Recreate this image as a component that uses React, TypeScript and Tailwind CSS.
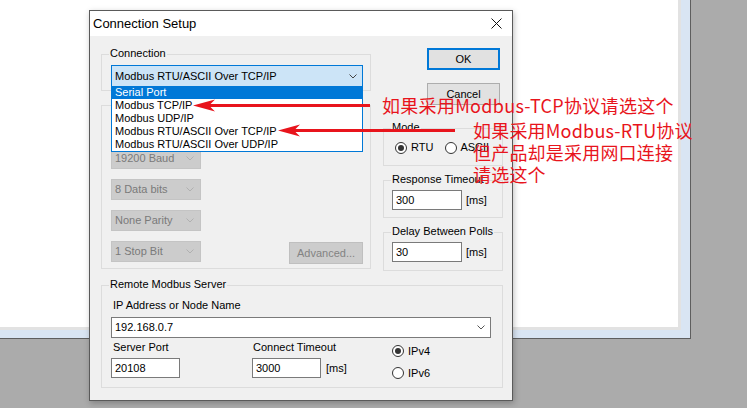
import React from "react";

function Chevron({ color }: { color: string }) {
  return (
    <svg width="8" height="5" viewBox="0 0 8 5" className="shrink-0">
      <path d="M0.5 0.5 L4 4 L7.5 0.5" fill="none" stroke={color} strokeWidth="1" />
    </svg>
  );
}

function Group({
  label,
  className,
  children,
}: {
  label?: string;
  className?: string;
  children?: React.ReactNode;
}) {
  return (
    <div className={`relative border border-[#dcdcdc] ${className ?? ""}`}>
      {label && (
        <span className="absolute left-[7px] top-[-8px] whitespace-nowrap bg-[#f0f0f0] px-[1px] leading-[13px]">
          {label}
        </span>
      )}
      {children}
    </div>
  );
}

function Radio({ checked }: { checked?: boolean }) {
  return (
    <span className="flex h-[12px] w-[12px] shrink-0 items-center justify-center rounded-full border border-[#333333] bg-white">
      {checked && <span className="h-[6px] w-[6px] rounded-full bg-[#333333]" />}
    </span>
  );
}

function DisabledCombo({ text }: { text: string }) {
  return (
    <div className="flex h-[21px] w-[90px] items-center justify-between border border-[#c4c4c4] bg-[#cccccc] pl-[3px] pr-[6px] text-[#7a7a7a]">
      <span className="leading-[13px]">{text}</span>
      <Chevron color="#b0b0b0" />
    </div>
  );
}

function TextBox({ value, w, h }: { value: string; w: string; h: string }) {
  return (
    <div className={`flex items-center border border-[#7a7a7a] bg-white pl-[3px] leading-[13px] ${w} ${h}`}>
      {value}
    </div>
  );
}

export default function App() {
  const items = [
    "Serial Port",
    "Modbus TCP/IP",
    "Modbus UDP/IP",
    "Modbus RTU/ASCII Over TCP/IP",
    "Modbus RTU/ASCII Over UDP/IP",
  ];
  return (
    <div className="relative h-[408px] w-[747px] overflow-hidden bg-[#ababab] font-['Liberation_Sans',Arial,sans-serif] text-[11px] text-black">
      {/* background window */}
      <div className="h-[339px] w-[691px] border-b border-r border-[#5e5e5e] bg-[#d9e5f3] pb-[8px] pr-[9px]">
        <div className="h-full w-full border-b-[3px] border-r-[3px] border-[#e2e2e2] bg-white" />
      </div>

      {/* dialog */}
      <div className="absolute left-[89px] top-[10px] flex h-[391px] w-[424px] flex-col border border-[#5a5a5a] bg-[#f0f0f0] shadow-[1px_2px_6px_rgba(0,0,0,0.25)]">
        <div className="flex h-[25px] shrink-0 items-center justify-between bg-white pl-[3px] pr-[10px] text-[13px]">
          <span>Connection Setup</span>
          <svg width="11" height="11" viewBox="0 0 11 11">
            <path d="M0.5 0.5 L10.5 10.5 M10.5 0.5 L0.5 10.5" stroke="#111" strokeWidth="1" />
          </svg>
        </div>

        <div className="flex flex-col pl-[11px]">
          <div className="flex">
            {/* left column */}
            <div className="flex w-[270px] flex-col pt-[18px]">
              <Group label="Connection" className="h-[37px] pl-[9px] pt-[10px]">
                <div className="relative w-[252px]">
                  <div className="flex h-[22px] items-center justify-between border border-[#0078d7] bg-[#cce4f7] pl-[3px] pr-[5px]">
                    <span className="leading-[13px]">Modbus RTU/ASCII Over TCP/IP</span>
                    <Chevron color="#444" />
                  </div>
                  <div className="absolute left-0 top-[21px] z-10 w-[252px] border border-t-0 border-[#0078d7] bg-white">
                    {items.map((it, i) => (
                      <div
                        key={it}
                        className={`h-[13px] pl-[3px] leading-[13px] ${i === 0 ? "bg-[#0078d7] text-white" : ""}`}
                      >
                        {it}
                      </div>
                    ))}
                  </div>
                </div>
              </Group>

              <Group className="mt-[14px] h-[164px] pl-[9px] pt-[42px]">
                <div className="flex w-[252px] flex-col gap-[10px]">
                  <DisabledCombo text="19200 Baud" />
                  <DisabledCombo text="8 Data bits" />
                  <DisabledCombo text="None Parity" />
                  <div className="flex items-start justify-between">
                    <DisabledCombo text="1 Stop Bit" />
                    <div className="mt-[1px] flex h-[22px] w-[74px] items-center justify-center border border-[#bfbfbf] bg-[#cccccc] text-[#838383]">
                      Advanced...
                    </div>
                  </div>
                </div>
              </Group>
            </div>

            {/* right column */}
            <div className="ml-[12px] flex w-[120px] flex-col pt-[12px]">
              <div className="ml-[44px] flex h-[22px] w-[73px] items-center justify-center border-2 border-[#0078d7] bg-[#e1e1e1]">
                OK
              </div>
              <div className="ml-[44px] mt-[13px] flex h-[22px] w-[73px] items-center justify-center border border-[#adadad] bg-[#e1e1e1]">
                Cancel
              </div>

              <Group label="Mode" className="mt-[23px] h-[38px] pl-[11px] pt-[12px]">
                <div className="flex h-[13px] items-center">
                  <Radio checked />
                  <span className="ml-[4px] leading-[13px]">RTU</span>
                  <span className="ml-[12px]">
                    <Radio />
                  </span>
                  <span className="ml-[3px] leading-[13px]">ASCII</span>
                </div>
              </Group>

              <Group label="Response Timeout" className="mt-[14px] h-[38px] pl-[8px] pt-[9px]">
                <div className="flex items-center">
                  <TextBox value="300" w="w-[70px]" h="h-[20px]" />
                  <span className="ml-[4px]">[ms]</span>
                </div>
              </Group>

              <Group label="Delay Between Polls" className="mt-[14px] h-[39px] pl-[8px] pt-[9px]">
                <div className="flex items-center">
                  <TextBox value="30" w="w-[70px]" h="h-[20px]" />
                  <span className="ml-[4px]">[ms]</span>
                </div>
              </Group>
            </div>
          </div>

          {/* remote server */}
          <Group label="Remote Modbus Server" className="mt-[14px] h-[103px] w-[402px] pl-[9px] pt-[13px]">
            <div className="ml-[2px] leading-[13px]">IP Address or Node Name</div>
            <div className="mt-[5px] flex h-[21px] w-[380px] items-center justify-between border border-[#7a7a7a] bg-white pl-[3px] pr-[5px]">
              <span className="leading-[13px]">192.168.0.7</span>
              <Chevron color="#555" />
            </div>
            <div className="mt-[3px] flex">
              <div className="flex w-[141px] flex-col">
                <span className="ml-[2px] leading-[13px]">Server Port</span>
                <div className="mt-[4px]">
                  <TextBox value="20108" w="w-[69px]" h="h-[20px]" />
                </div>
              </div>
              <div className="flex w-[140px] flex-col">
                <span className="ml-[1px] leading-[13px]">Connect Timeout</span>
                <div className="mt-[4px] flex items-center">
                  <TextBox value="3000" w="w-[69px]" h="h-[20px]" />
                  <span className="ml-[5px]">[ms]</span>
                </div>
              </div>
              <div className="mt-[4px] flex flex-col gap-[10px]">
                <div className="flex h-[12px] items-center">
                  <Radio checked />
                  <span className="ml-[4px] leading-[12px]">IPv4</span>
                </div>
                <div className="flex h-[12px] items-center">
                  <Radio />
                  <span className="ml-[4px] leading-[12px]">IPv6</span>
                </div>
              </div>
            </div>
          </Group>
        </div>
      </div>

      {/* red annotations */}
      <svg className="pointer-events-none absolute left-0 top-0 z-30" width="747" height="408">
        <line x1="208" y1="105.5" x2="370" y2="105.5" stroke="#e8141c" strokeWidth="3" />
        <polygon points="193,105.5 215,99.5 209,105.5 215,111.5" fill="#e8141c" />
        <line x1="293" y1="130.5" x2="455" y2="130.5" stroke="#e8141c" strokeWidth="3" />
        <polygon points="278,130.5 300,124.5 294,130.5 300,136.5" fill="#e8141c" />
      </svg>
      <div className="absolute left-[382px] top-[94px] z-30 whitespace-nowrap font-['Noto_Sans_CJK_SC',sans-serif] text-[18px] leading-[22px] tracking-[0.3px] text-[#e8141c]">
        如果采用Modbus-TCP协议请选这个
      </div>
      <div className="absolute left-[473px] top-[119px] z-30 whitespace-nowrap font-['Noto_Sans_CJK_SC',sans-serif] text-[18px] leading-[22px] tracking-[0.2px] text-[#e8141c]">
        如果采用Modbus-RTU协议
        <br />
        但产品却是采用网口连接
        <br />
        请选这个
      </div>
    </div>
  );
}
